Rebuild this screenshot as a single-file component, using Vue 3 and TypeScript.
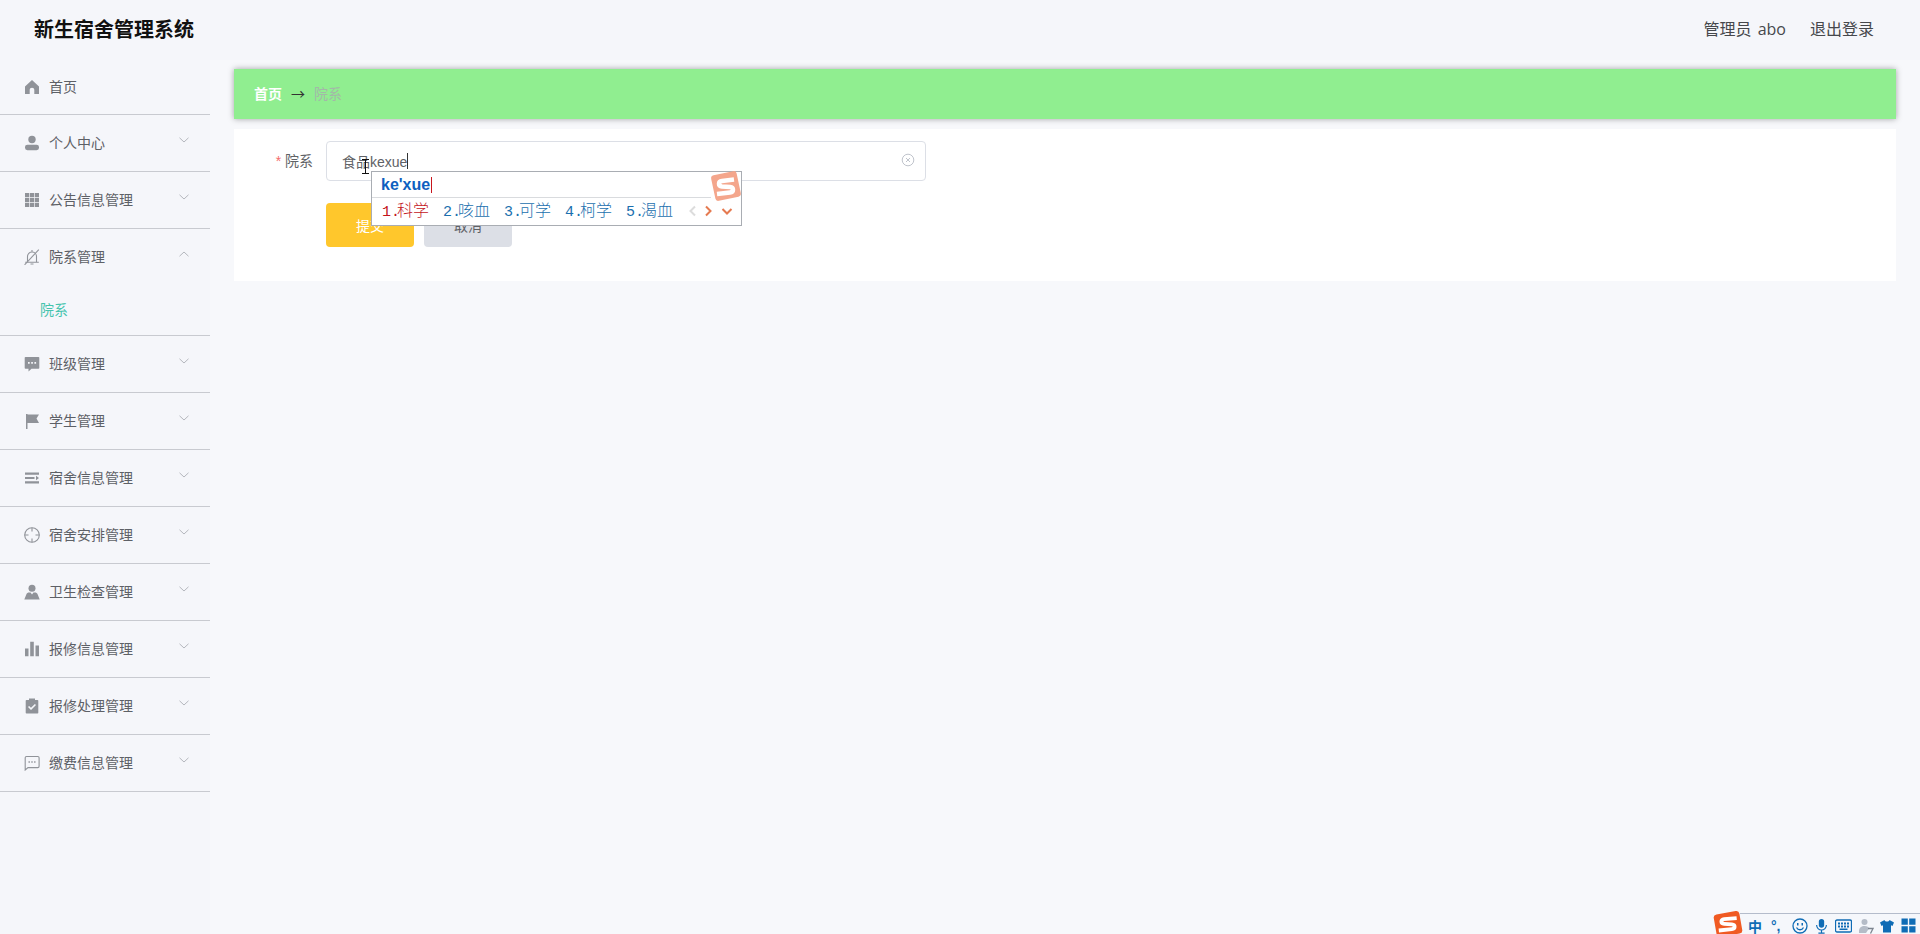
<script setup lang="ts">
interface MenuItem {
  label: string
  icon: string
  arrow?: 'down' | 'up'
  children?: string[]
}
const menu: MenuItem[] = [
  { label: '首页', icon: 'home' },
  { label: '个人中心', icon: 'user', arrow: 'down' },
  { label: '公告信息管理', icon: 'grid', arrow: 'down' },
  { label: '院系管理', icon: 'belloff', arrow: 'up', children: ['院系'] },
  { label: '班级管理', icon: 'comment', arrow: 'down' },
  { label: '学生管理', icon: 'flag', arrow: 'down' },
  { label: '宿舍信息管理', icon: 'operation', arrow: 'down' },
  { label: '宿舍安排管理', icon: 'aim', arrow: 'down' },
  { label: '卫生检查管理', icon: 'custom', arrow: 'down' },
  { label: '报修信息管理', icon: 'data', arrow: 'down' },
  { label: '报修处理管理', icon: 'claim', arrow: 'down' },
  { label: '缴费信息管理', icon: 'chat', arrow: 'down' },
]
const candidates = [
  { n: '1.', w: '科学' },
  { n: '2.', w: '咳血' },
  { n: '3.', w: '可学' },
  { n: '4.', w: '柯学' },
  { n: '5.', w: '渴血' },
]
</script>

<template>
  <div class="page">
    <header class="topbar">
      <h1 class="brand">新生宿舍管理系统</h1>
      <div class="account">
        <span>管理员 abo</span>
        <span>退出登录</span>
      </div>
    </header>
    <div class="body">
      <aside class="sidebar">
        <div v-for="(item, i) in menu" :key="item.label" class="group">
          <div class="row" :class="{ first: i === 0 }">
            <svg class="icon" viewBox="0 0 16 16" aria-hidden="true">
              <path v-if="item.icon === 'home'" d="M8 1 15 7.400V15H10.300V11C10.300 9.700 9.300 8.800 8 8.800S5.700 9.700 5.700 11V15H1V7.400Z" />
              <g v-else-if="item.icon === 'user'">
                <circle cx="8" cy="4.500" r="3.700" />
                <rect x="1" y="9.700" width="14" height="5.500" rx="2.400" />
              </g>
              <path v-else-if="item.icon === 'grid'" d="M1 1h4.200v4.200H1zM5.900 1h4.200v4.200H5.900zM10.800 1H15v4.200h-4.200zM1 5.900h4.200v4.200H1zM5.900 5.900h4.200v4.200H5.900zM10.800 5.900H15v4.200h-4.200zM1 10.800h4.200V15H1zM5.900 10.800h4.200V15H5.900zM10.800 10.800H15V15h-4.200z" />
              <g v-else-if="item.icon === 'belloff'" class="line">
                <path d="M3.500 13V7.500C3.500 5 5.500 3 8 3s4.500 2 4.500 4.500V13M1.200 13.200H14.800M6.500 15H9.500M8 3V1" />
                <path d="M.6 15.800 14.800.6" />
              </g>
              <path v-else-if="item.icon === 'comment'" fill-rule="evenodd" d="M1.500 1h13a.8.8 0 0 1 .8.8v10.200a.8.8 0 0 1-.8.8H7.500L4.500 15.500v-2.700H1.500a.8.8 0 0 1-.8-.8V1.800a.8.8 0 0 1 .8-.8ZM4 6v1.700h1.700V6Zm3.200 0v1.700h1.700V6Zm3.200 0v1.700h1.700V6Z" />
              <path v-else-if="item.icon === 'flag'" d="M2 1h1.500v15H2zM3.500 1.500H15L12.500 5.500l2.500 4.500H3.500z" />
              <path v-else-if="item.icon === 'operation'" d="M1 2.500h14v2.200H1zM1 6.900h9.500v2.200H1zM12 5.800l3 2.200-3 2.200zM1 11.300h14v2.200H1z" />
              <g v-else-if="item.icon === 'aim'" class="line">
                <circle cx="8" cy="8" r="7.300" />
                <path d="M8 .7v3.800M8 11.500v3.800M.7 8h3.800M11.500 8h3.800" />
              </g>
              <g v-else-if="item.icon === 'custom'">
                <circle cx="8" cy="4.300" r="3.500" />
                <path d="M.3 15.500 2.300 10.400C2.800 9 4 8.500 5 8.500h1.500L8 10.500 9.500 8.500H11c1 0 2.200.5 2.700 1.900L15.700 15.500Z" />
              </g>
              <path v-else-if="item.icon === 'data'" d="M1 7.500h3.500V15.300H1zM6.200 .8h3.600V15.300H6.200zM11.500 4.500h3.500V15.300h-3.500z" />
              <path v-else-if="item.icon === 'claim'" fill-rule="evenodd" d="M5 .5h6V2h2.500a.8.800 0 0 1 .8.800v12a.8.800 0 0 1-.8.800h-11a.8.800 0 0 1-.8-.8v-12a.8.800 0 0 1 .8-.8H5ZM5.100 8 4 9.100 7 12l5-5-1.100-1.100L7 9.800Z" />
              <g v-else>
                <path class="stroke" d="M2.500 1.500h11.300a1.300 1.300 0 0 1 1.300 1.300v8.500a1.300 1.300 0 0 1-1.300 1.300H4L1.200 15V2.800A1.300 1.300 0 0 1 2.500 1.500Z" />
                <path d="M4.500 6.300h1.400v1.400H4.500zM7.300 6.300h1.400v1.400H7.300zM10.100 6.300h1.400v1.400h-1.400z" />
              </g>
            </svg>
            <span class="label">{{ item.label }}</span>
            <svg v-if="item.arrow" class="arrow" :class="{ up: item.arrow === 'up' }" viewBox="0 0 10 6" aria-hidden="true">
              <path d="M.5.800 5 5 9.500.8" />
            </svg>
          </div>
          <div v-for="c in item.children" :key="c" class="sub">{{ c }}</div>
        </div>
      </aside>

      <main class="main">
        <nav class="crumbs">
          <b>首页</b>
          <span class="sep">→</span>
          <span class="current">院系</span>
        </nav>
        <section class="card">
          <div class="field">
            <label class="field-label"><i>*</i> 院系</label>
            <div class="input">
              <span>食品kexue</span>
              <span class="caret"></span>
              <svg class="clear" viewBox="0 0 14 14" aria-hidden="true">
                <circle cx="7" cy="7" r="5.800" />
                <path d="M5 5l4 4M9 5l-4 4" />
              </svg>
            </div>
          </div>
          <div class="actions">
            <button class="btn primary" type="button">提交</button>
            <button class="btn muted" type="button">取消</button>
          </div>
        </section>
      </main>
    </div>

    <div class="ime">
      <div class="ime-code">ke'xue<span class="ime-caret"></span></div>
      <div class="ime-list">
        <span v-for="(c, i) in candidates" :key="c.n" class="cand" :class="{ active: i === 0 }"><span class="num">{{ c.n }}</span>{{ c.w }}</span>
        <svg class="nav" viewBox="0 0 52 14" aria-hidden="true">
          <path class="off" d="M8 2.500 3.500 7 8 11.500" />
          <path d="M19 2.500 23.500 7 19 11.500M35.500 5 40 9.500 44.500 5" />
        </svg>
      </div>
      <svg class="ime-logo" viewBox="0 0 32 32" aria-hidden="true">
        <rect x="3" y="3" width="26" height="26" rx="3" transform="rotate(-12 16 16)" />
        <path d="M24 9.500 12 11c-4 .5-4 5 0 5.500l8 .5c4 .5 4 5 0 5.500L7 24" />
      </svg>
    </div>

    <svg class="ibeam" viewBox="0 0 9 15" aria-hidden="true">
      <path d="M1 .5h7M4.500.5v14M1 14.500h7" />
    </svg>

    <div class="tray">
      <svg class="tray-logo" viewBox="0 0 30 24" aria-hidden="true">
        <rect x="3" y="1.500" width="24" height="21" rx="3" transform="rotate(-10 15 12)" />
        <path d="M23 6.500 11.500 7.500c-3.500.5-3.500 4 0 4.300l7 .5c3.500.4 3.500 4 0 4.400L6.500 18" />
      </svg>
      <span class="zh">中</span>
      <span class="punct">°,</span>
      <svg viewBox="0 0 16 16" class="t" aria-hidden="true"><circle cx="8" cy="8" r="7" class="ts" /><path class="ts" d="M4.500 9.500c1.500 3 5.500 3 7 0" /><path d="M5 5h1.500v2.500H5zM9.500 5H11v2.500H9.500z" /></svg>
      <svg viewBox="0 0 14 18" class="t mic" aria-hidden="true"><rect x="4" y="1" width="6" height="10" rx="3" /><path class="ts" d="M1.500 8a5.500 5.500 0 0 0 11 0M7 13.500V17M3.500 17h7" /></svg>
      <svg viewBox="0 0 17 14" class="t key" aria-hidden="true"><rect x=".5" y="1" width="16" height="12" rx="1.500" class="ts" /><path d="M3 3.500h2v2H3zM6 3.500h2v2H6zM9 3.500h2v2H9zM12 3.500h2v2h-2zM3 6.500h2v2H3zM6 6.500h2v2H6zM9 6.500h2v2H9zM12 6.500h2v2h-2zM4.500 9.500h8v1.500h-8z" /></svg>
      <svg viewBox="0 0 16 16" class="t who" aria-hidden="true"><circle cx="6.500" cy="4" r="3" /><path d="M1 13c0-3.500 2.500-5 5.500-5s4 1 4.500 2.500L8 15H1Z" /><path class="seven" d="M10 10.500h5l-2.500 5" /></svg>
      <svg viewBox="0 0 14 14" class="t shirt" aria-hidden="true"><path d="M4.500 1 0 3.500 1.500 7 3 6.300V13.500H11V6.300L12.500 7 14 3.500 9.500 1C9 3 5 3 4.500 1Z" /></svg>
      <svg viewBox="0 0 15 15" class="t apps" aria-hidden="true"><path d="M.5.500h6.300v6.300H.5zM8.200.500h6.300v6.300H8.200zM.5 8.200h6.300v6.300H.5zM8.200 8.200h6.300v6.300H8.200z" /></svg>
    </div>
  </div>
</template>

<style scoped>
.page {
  height: 934px;
  overflow: hidden;
  position: relative;
  display: flex;
  flex-direction: column;
  background: #f7f8fb;
  color: #606266;
  font-family: "Liberation Sans", "Noto Sans CJK SC", sans-serif;
  font-size: 14px;
}
.topbar {
  height: 60px;
  flex: none;
  display: flex;
  align-items: center;
  justify-content: space-between;
  padding: 0 46px 0 34px;
  background: #f5f6fa;
}
.brand {
  margin: 0;
  font-size: 20px;
  line-height: 60px;
  font-weight: 700;
  color: #111;
}
.account {
  display: flex;
  gap: 24px;
  font-family: "Open Sans", "Noto Sans CJK SC", sans-serif;
  font-size: 16px;
  color: #46484c;
  margin-top: -4px;
  word-spacing: 2px;
}
.body {
  flex: 1;
  display: flex;
  min-height: 0;
}
.sidebar {
  width: 210px;
  flex: none;
  background: #f5f6fa;
}
.group {
  border-bottom: 1px solid #c8cad0;
}
.row {
  height: 56px;
  display: flex;
  align-items: center;
  padding-left: 24px;
}
.row.first {
  height: 54px;
}
.icon {
  width: 16px;
  height: 16px;
  flex: none;
  margin-right: 9px;
  fill: #909399;
}
.icon .line,
.icon .stroke {
  fill: none;
  stroke: #909399;
  stroke-width: 1.100;
}
.label {
  flex: 1;
  color: #5d6066;
  line-height: 20px;
}
.arrow {
  width: 10px;
  height: 6px;
  margin: 0 21px 6px 0;
  fill: none;
  stroke: #b4b7bd;
  stroke-width: 1;
}
.arrow.up {
  transform: rotate(180deg);
}
.sub {
  height: 50px;
  line-height: 50px;
  padding-left: 40px;
  color: #45c4ae;
}
.main {
  flex: 1;
  min-width: 0;
  padding: 9px 24px 0;
}
.crumbs {
  height: 50px;
  box-sizing: border-box;
  display: flex;
  align-items: center;
  padding: 0 0 2px 20px;
  background: #90ee90;
  box-shadow: 0 0 6px rgba(0, 0, 0, 0.35);
  color: #fff;
}
.crumbs b {
  font-weight: 700;
}
.sep {
  margin: 0 9px;
  color: #333;
  font-size: 14px;
  font-family: "Noto Sans CJK SC", sans-serif;
}
.current {
  color: #a3b8a8;
}
.card {
  margin-top: 10px;
  height: 152px;
  box-sizing: border-box;
  padding: 12px 0 0;
  background: #fff;
}
.field {
  display: flex;
  align-items: center;
  height: 40px;
}
.field-label {
  width: 92px;
  flex: none;
  box-sizing: border-box;
  padding-right: 13px;
  text-align: right;
  color: #606266;
  margin-top: -3px;
}
.field-label i {
  font-style: normal;
  color: #f56c6c;
}
.input {
  width: 600px;
  height: 40px;
  box-sizing: border-box;
  border: 1px solid #dcdfe6;
  border-radius: 4px;
  padding-left: 15px;
  display: flex;
  align-items: center;
  position: relative;
  color: #606266;
}
.caret {
  width: 1px;
  height: 16px;
  background: #333;
}
.clear {
  position: absolute;
  right: 10px;
  top: 11px;
  width: 14px;
  height: 14px;
  fill: none;
  stroke: #c0c4cc;
  stroke-width: 1;
}
.actions {
  display: flex;
  gap: 10px;
  margin: 22px 0 0 92px;
}
.btn {
  width: 88px;
  height: 44px;
  border: 0;
  border-radius: 4px;
  font: inherit;
  padding: 0;
}
.primary {
  background: #ffc72c;
  color: #fff;
}
.muted {
  background: #dcdfe6;
  color: #606266;
}
.ime {
  position: absolute;
  left: 371px;
  top: 171px;
  width: 371px;
  height: 55px;
  box-sizing: border-box;
  border: 1px solid #a9adb3;
  background: #fff;
}
.ime-code {
  height: 25px;
  line-height: 24px;
  padding-left: 9px;
  color: #0e5fc0;
  font-size: 16px;
  font-weight: 700;
  border-bottom: 1px solid #d9dbde;
  margin-right: 30px;
  display: flex;
  align-items: center;
}
.ime-caret {
  width: 1px;
  height: 16px;
  background: #c8161d;
  margin-left: 1px;
}
.ime-list {
  height: 27px;
  display: flex;
  align-items: center;
  gap: 14px;
  padding-left: 10px;
  font-size: 16px;
  line-height: 22px;
  color: #1a6fae;
  position: relative;
}
.cand {
  display: flex;
  align-items: baseline;
  width: 47px;
  white-space: nowrap;
  font-weight: 300;
}
.num {
  width: 15px;
  flex: none;
  font-family: "Liberation Mono", monospace;
  font-size: 15px;
}
.active {
  color: #c3131b;
}
.nav {
  position: absolute;
  left: 315px;
  top: 6px;
  width: 52px;
  height: 14px;
  fill: none;
  stroke: #e57a50;
  stroke-width: 2;
}
.nav .off {
  stroke: #dcdcdc;
}
.ime-logo {
  position: absolute;
  right: -1px;
  top: -2px;
  width: 32px;
  height: 32px;
}
.ime-logo rect {
  fill: #f4a68c;
}
.ime-logo path {
  fill: none;
  stroke: #fff;
  stroke-width: 4.500;
  stroke-linejoin: round;
}
.ibeam {
  position: absolute;
  left: 361px;
  top: 159px;
  width: 9px;
  height: 15px;
  fill: none;
  stroke: #111;
  stroke-width: 1;
}
.tray {
  position: absolute;
  right: 0;
  bottom: 0;
  width: 180px;
  height: 21px;
  box-sizing: border-box;
  border-top: 1px solid #b4bccb;
  background: #f5f7fb;
  display: flex;
  align-items: center;
  padding: 3px 0 0 8px;
  color: #0f6cb5;
}
.tray-logo {
  position: absolute;
  left: -29px;
  top: -3px;
  width: 34px;
  height: 26px;
}
.tray-logo rect {
  fill: #f05a22;
}
.tray-logo path {
  fill: none;
  stroke: #fff;
  stroke-width: 3.500;
}
.zh {
  font-size: 14px;
  font-weight: 700;
  width: 23px;
  font-family: "Noto Sans CJK SC", sans-serif;
}
.punct {
  width: 21px;
  font-size: 14px;
  font-weight: 700;
  line-height: 12px;
}
.t {
  width: 16px;
  height: 16px;
  flex: none;
  fill: #0f6cb5;
  margin-right: 7px;
}
.t .ts {
  fill: none;
  stroke: #0f6cb5;
  stroke-width: 1.300;
}
.mic {
  width: 13px;
  margin-right: 7px;
}
.key {
  width: 17px;
  height: 14px;
  margin-right: 6px;
}
.who {
  fill: #b5bcc7;
  margin-right: 6px;
}
.seven {
  fill: none;
  stroke: #7d8590;
  stroke-width: 1.300;
}
.shirt {
  width: 14px;
  height: 14px;
  margin-right: 7px;
}
.apps {
  width: 15px;
  height: 15px;
  margin-right: 0;
}
</style>

<style>
html,
body {
  margin: 0;
  background: #f7f8fb;
}
</style>
